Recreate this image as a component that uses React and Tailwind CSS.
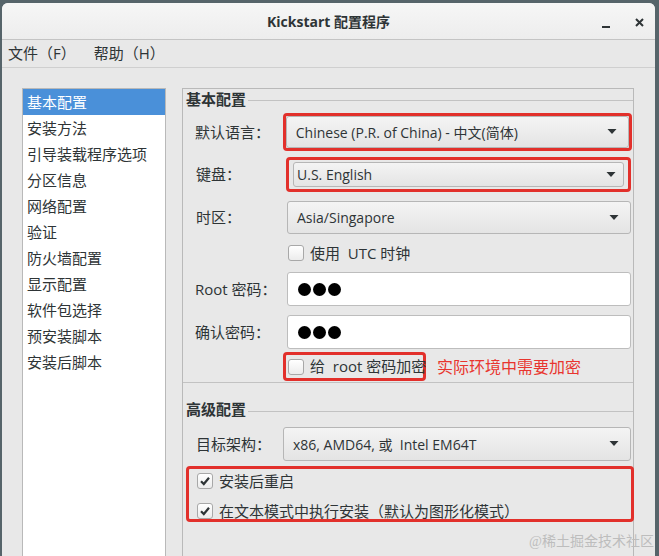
import React from 'react';

const font = { fontFamily: '"Open Sans", "Noto Sans CJK SC", sans-serif' };

const navItems = ['基本配置', '安装方法', '引导装载程序选项', '分区信息', '网络配置', '验证', '防火墙配置', '显示配置', '软件包选择', '预安装脚本', '安装后脚本'];

const Arrow = () => (
    <svg width="10" height="6" viewBox="0 0 10 6" className="shrink-0">
        <polygon points="0.5,0 9.5,0 5,5" fill="#2e3436" />
    </svg>
);

const Combo = ({ value, className = '', pad = 'pl-[9px] pr-[11px]' }) => (
    <div className={`flex items-center justify-between rounded-[3px] border border-[#b6b6b6] bg-gradient-to-b from-[#f4f4f4] to-[#e4e4e4] text-[14px] text-[#2e3436] ${pad} ${className}`}>
        <span>{value}</span>
        <Arrow />
    </div>
);

const Check = ({ checked }) => (
    <div className="w-[16px] h-[16px] shrink-0 rounded-[3px] border border-[#a8a8a8] bg-gradient-to-b from-white to-[#ececec] flex items-center justify-center">
        {checked && (
            <svg width="12" height="12" viewBox="0 0 12 12">
                <path d="M2 6.2 L4.8 9 L10 2.8" stroke="#2e3436" strokeWidth="2.2" fill="none" />
            </svg>
        )}
    </div>
);

const Dots = () => (
    <div className="flex gap-[2px] ml-[10px]">
        <div className="w-[13px] h-[13px] rounded-full bg-black" />
        <div className="w-[13px] h-[13px] rounded-full bg-black" />
        <div className="w-[13px] h-[13px] rounded-full bg-black" />
    </div>
);

export default function App() {
    return (
        <div className="w-[659px] h-[556px] bg-[#56646a] overflow-hidden relative" style={font}>
            <div className="ml-[2px] mr-[4px] mt-[3px] h-[553px] bg-[#e8e8e8] rounded-t-[6px] flex flex-col">
                {/* Title bar */}
                <div className="h-[37px] shrink-0 relative flex items-center justify-center rounded-t-[6px] bg-gradient-to-b from-[#f6f6f6] to-[#ededed] border-b border-[#c4c4c4]">
                    <span className="text-[14px] font-bold text-[#2e3436]">Kickstart 配置程序</span>
                    <span className="absolute left-[600px] top-[23px] w-[8px] h-[2px] bg-[#2e3436]" />
                    <svg className="absolute left-[633px] top-[15px]" width="9" height="9" viewBox="0 0 9 9">
                        <path d="M1 1 L8 8 M8 1 L1 8" stroke="#2e3436" strokeWidth="2" />
                    </svg>
                </div>

                {/* Menu bar */}
                <div className="h-[28px] shrink-0 flex items-center pl-[6px] gap-[18px] border-b border-[#cfcfcf] text-[15px] text-[#2e3436]">
                    <span>文件（F）</span>
                    <span>帮助（H）</span>
                </div>

                {/* Body */}
                <div className="flex-1 flex pt-[20px] pl-[20px] relative">
                    {/* Sidebar */}
                    <div className="w-[144px] border-l border-t border-r border-[#b9b9b9] bg-white text-[15px] text-[#2e3436]">
                        {navItems.map((item, i) => (
                            <div
                                key={item}
                                className={`h-[26px] flex items-center pl-[4px] ${i === 0 ? 'bg-[#4a90d9] text-white' : ''}`}
                            >
                                {item}
                            </div>
                        ))}
                    </div>

                    {/* Right panel */}
                    <div className="ml-[16px] w-[452px] border-l border-t border-r border-[#b9b9b9] text-[15px] text-[#2e3436]">
                        {/* Basic group */}
                        <div className="border-b border-[#c2c2c2] pb-[1px] h-[294px]">
                            <div className="h-[21px] flex items-center pl-[3px]">
                                <span className="font-bold">基本配置</span>
                                <div className="flex-1 h-px bg-[#c2c2c2] ml-[2px] mt-[2px]" />
                            </div>

                            <div className="pl-[12px] pr-px">
                                <div className="mt-[3px] flex items-center">
                                    <span className="w-[88px]">默认语言：</span>
                                    <div className="w-[350px] h-[38px] border-[3px] border-[#e2302b] rounded-[4px]">
                                        <Combo value="Chinese (P.R. of China) - 中文(简体)" className="h-full" />
                                    </div>
                                </div>

                                <div className="mt-[6px] flex items-center">
                                    <span className="w-[91px] pl-px">键盘：</span>
                                    <div className="w-[345px] h-[35px] border-[3px] border-[#e2302b] rounded-[4px] px-[4px] py-[2px]">
                                        <Combo value="U.S. English" className="h-full" pad="pl-[3px] pr-[7px]" />
                                    </div>
                                </div>

                                <div className="mt-[9px] flex items-center">
                                    <span className="w-[92px] pl-px">时区：</span>
                                    <Combo value="Asia/Singapore" className="w-[344px] h-[33px]" />
                                </div>

                                <div className="mt-[11px] h-[16px] flex items-center ml-[93px] gap-[6px]">
                                    <Check />
                                    <span>使用&nbsp; UTC 时钟</span>
                                </div>

                                <div className="mt-[11px] flex items-center">
                                    <span className="w-[92px]">Root 密码：</span>
                                    <div className="w-[344px] h-[34px] bg-white border border-[#bdbdbd] rounded-[3px] flex items-center">
                                        <Dots />
                                    </div>
                                </div>

                                <div className="mt-[9px] flex items-center">
                                    <span className="w-[92px]">确认密码：</span>
                                    <div className="w-[344px] h-[34px] bg-white border border-[#bdbdbd] rounded-[3px] flex items-center">
                                        <Dots />
                                    </div>
                                </div>

                                <div className="mt-[3px] flex items-center">
                                    <div className="ml-[88px] w-[143px] h-[29px] border-[3px] border-[#e2302b] rounded-[4px] flex items-center pl-[2px] gap-[6px]">
                                        <Check />
                                        <span className="whitespace-nowrap">给&nbsp; root 密码加密</span>
                                    </div>
                                    <span className="ml-[11px] text-[16px] text-[#e8352e]">实际环境中需要加密</span>
                                </div>
                            </div>
                        </div>

                        {/* Advanced group */}
                        <div className="pt-[16px]">
                            <div className="h-[21px] flex items-center pl-[3px]">
                                <span className="font-bold">高级配置</span>
                                <div className="flex-1 h-px bg-[#c2c2c2] ml-[2px] mt-[3px]" />
                            </div>

                            <div className="mt-[7px] pl-[13px] pr-px flex items-center">
                                <span className="w-[87px]">目标架构：</span>
                                <Combo value="x86, AMD64, 或  Intel EM64T" className="w-[348px] h-[34px] whitespace-pre" />
                            </div>

                            <div className="mt-[5px] ml-[3px] w-[448px] h-[56px] border-[3px] border-[#e2302b] rounded-[4px] pt-[4px] pl-[8px] flex flex-col gap-[14px]">
                                <div className="h-[16px] flex items-center gap-[6px]">
                                    <Check checked />
                                    <span>安装后重启</span>
                                </div>
                                <div className="h-[16px] flex items-center gap-[6px]">
                                    <Check checked />
                                    <span>在文本模式中执行安装（默认为图形化模式）</span>
                                </div>
                            </div>
                        </div>
                    </div>

                    <span
                        className="absolute right-[1px] bottom-[4px] text-[14px] text-[#bdbdbd]"
                        style={{ fontFamily: '"Liberation Serif", "Noto Sans CJK SC", serif' }}
                    >
                        @稀土掘金技术社区
                    </span>
                </div>
            </div>
        </div>
    );
}
